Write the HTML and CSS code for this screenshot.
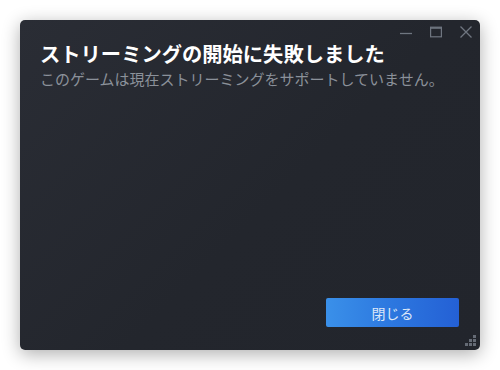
FILE: index.html
```html
<!DOCTYPE html>
<html lang="ja">
<head>
    <meta charset="UTF-8">
    <meta name="viewport" content="width=device-width, initial-scale=1.0">
    <title>ストリーミングエラー</title>
    <link rel="stylesheet" href="styles.css">
</head>
<body>

<div class="dialog">
    <div class="titlebar">
        <span class="win-btn">
            <svg width="14" height="14" viewBox="0 0 14 14"><path d="M1 8.5h12" stroke="#6f7680" stroke-width="1.3"/></svg>
        </span>
        <span class="win-btn">
            <svg width="14" height="14" viewBox="0 0 14 14"><rect x="1.6" y="2.2" width="10.8" height="9.6" fill="none" stroke="#6f7680" stroke-width="1.2"/><path d="M1.6 3h10.8" stroke="#6f7680" stroke-width="1.6"/></svg>
        </span>
        <span class="win-btn">
            <svg width="14" height="14" viewBox="0 0 14 14"><path d="M1.5 1.5l11 11M12.5 1.5l-11 11" stroke="#6f7680" stroke-width="1.3"/></svg>
        </span>
    </div>

    <div class="content">
        <h1 class="dialog-title">ストリーミングの開始に失敗しました</h1>
        <p class="dialog-text">このゲームは現在ストリーミングをサポートしていません。</p>
    </div>

    <div class="footer">
        <button type="button" class="btn-close">閉じる</button>
    </div>

    <div class="grip">
        <i></i><i></i><i></i><i></i><i></i><i></i>
    </div>
</div>

</body>
</html>
```

FILE: styles.css
```css
body {
    margin: 0;
    padding: 20px;
    background-color: #ffffff;
    font-family: "Noto Sans CJK JP", "Noto Sans", sans-serif;
}

.dialog {
    position: relative;
    width: 460px;
    height: 330px;
    border-radius: 5px;
    background: linear-gradient(135deg, #2a2d35 0%, #23262d 55%, #22252c 100%);
    box-shadow: 0 4px 18px rgba(0, 0, 0, 0.32);
    display: flex;
    flex-direction: column;
    box-sizing: border-box;
}

.titlebar {
    display: flex;
    justify-content: flex-end;
    height: 20px;
    padding-top: 2px;
    margin-right: -1px;
}

.win-btn {
    width: 30px;
    height: 20px;
    display: flex;
    align-items: center;
    justify-content: center;
}

.win-btn svg {
    display: block;
}

.content {
    padding: 0 20px;
}

.dialog-title {
    margin: 0;
    font-size: 20.3px;
    line-height: 22px;
    font-weight: bold;
    color: #ffffff;
}

.dialog-text {
    margin: 5px 0 0;
    font-size: 15px;
    line-height: 20px;
    color: #8b919a;
}

.footer {
    margin-top: auto;
    display: flex;
    justify-content: flex-end;
    padding: 0 21px 23px;
}

.btn-close {
    width: 133px;
    height: 29px;
    border: none;
    border-radius: 2px;
    background: linear-gradient(90deg, #3a90e9 0%, #2c77df 50%, #2460d5 100%);
    color: #dce8f8;
    font-family: "Noto Sans CJK JP", "Noto Sans", sans-serif;
    font-size: 14px;
    padding: 0;
    cursor: pointer;
}

.grip {
    position: absolute;
    right: 4px;
    bottom: 4px;
    display: grid;
    grid-template-columns: repeat(3, 3px);
    grid-template-rows: repeat(3, 3px);
    gap: 1px;
}

.grip i {
    background-color: #656b75;
}

.grip i:nth-child(1) { grid-column: 3; grid-row: 1; }
.grip i:nth-child(2) { grid-column: 2; grid-row: 2; }
.grip i:nth-child(3) { grid-column: 3; grid-row: 2; }
.grip i:nth-child(4) { grid-column: 1; grid-row: 3; }
.grip i:nth-child(5) { grid-column: 2; grid-row: 3; }
.grip i:nth-child(6) { grid-column: 3; grid-row: 3; }
```
